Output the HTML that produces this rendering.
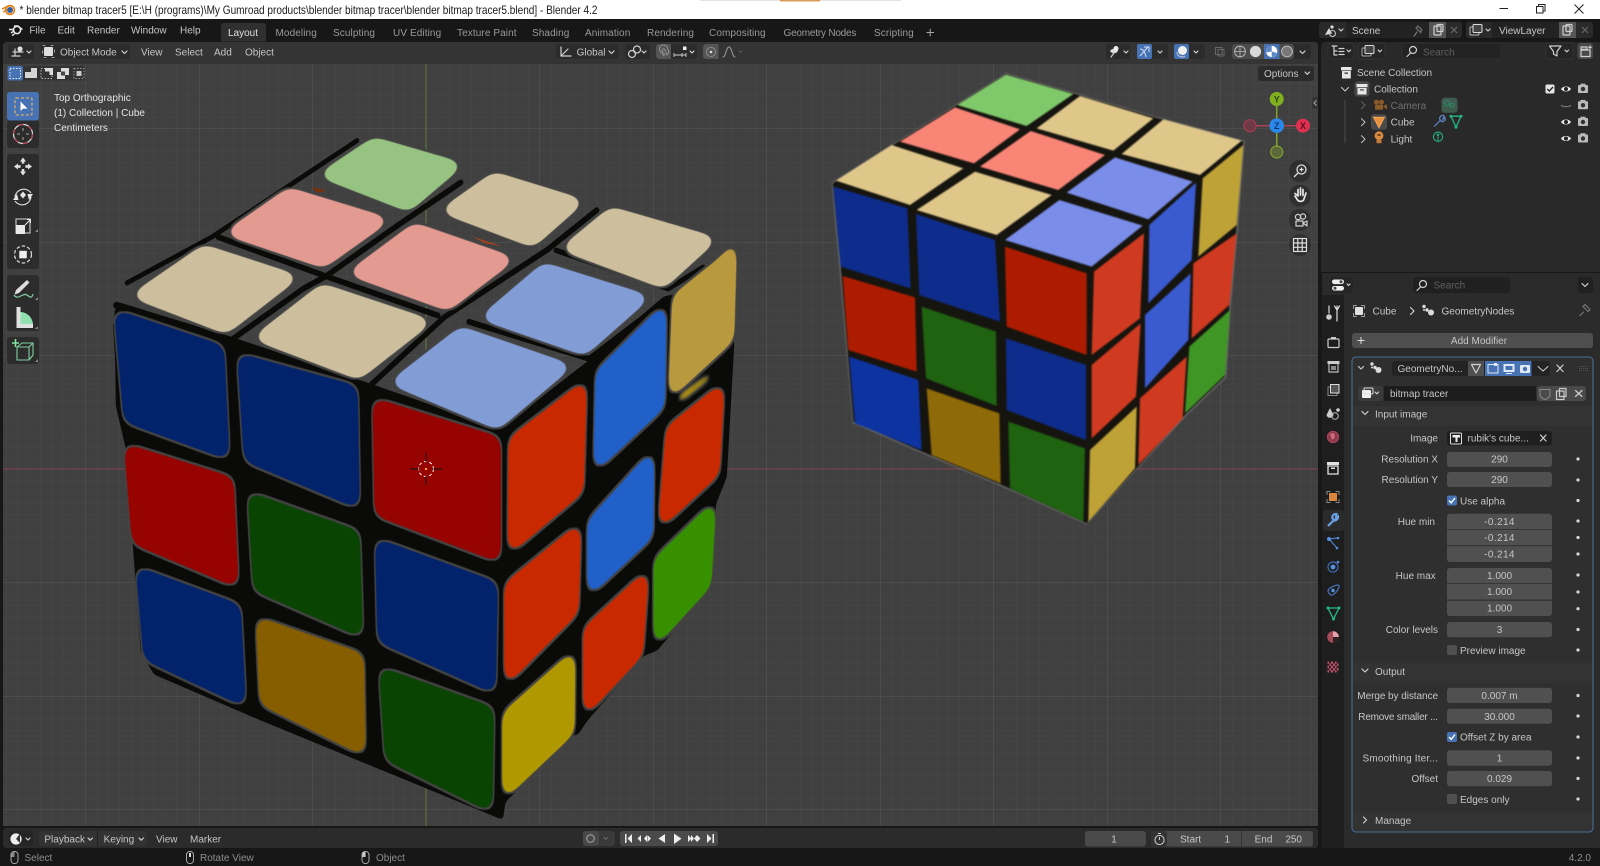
<!DOCTYPE html>
<html><head><meta charset="utf-8"><title>Blender 4.2</title>
<style>
html,body{margin:0;padding:0;background:#181818;overflow:hidden;width:1600px;height:866px}
svg{position:absolute;left:0;top:0;display:block}
text{font-family:"Liberation Sans",sans-serif;font-size:10px;fill:#c6c6c6}
.m{text-anchor:middle}.e{text-anchor:end}
.tab{fill:#9a9a9a;letter-spacing:.1px}
.st{fill:#8e8e8e}
.ic{fill:none;stroke:#d0d0d0;stroke-width:1.2;stroke-linecap:round;stroke-linejoin:round}
</style></head><body>
<svg width="1600" height="866" viewBox="0 0 1600 866" xmlns="http://www.w3.org/2000/svg">
<defs>
<pattern id="gm" width="11.35" height="11.35" patternUnits="userSpaceOnUse" patternTransform="translate(426 469)"><path d="M0 0H11.35M0 0V11.35" stroke="#484848" stroke-width="1" fill="none"/></pattern>
<pattern id="gM" width="113.5" height="113.5" patternUnits="userSpaceOnUse" patternTransform="translate(426 469)"><path d="M0 0H113.5M0 0V113.5" stroke="#575757" stroke-width="1" fill="none"/></pattern>
<filter id="stk" x="-25%" y="-25%" width="150%" height="150%" color-interpolation-filters="sRGB">
<feGaussianBlur stdDeviation="16"/><feComponentTransfer result="r"><feFuncA type="linear" slope="14" intercept="-6.2"/></feComponentTransfer>
<feMorphology in="r" operator="dilate" radius="4" result="d"/><feFlood flood-color="#434343"/><feComposite in2="d" operator="in" result="h"/>
<feMerge><feMergeNode in="h"/><feMergeNode in="r"/></feMerge></filter>
<filter id="bod" filterUnits="userSpaceOnUse" x="-50" y="-50" width="1750" height="1750" color-interpolation-filters="sRGB">
<feGaussianBlur stdDeviation="5"/><feComponentTransfer><feFuncA type="linear" slope="10" intercept="-4.5"/></feComponentTransfer></filter>
<filter id="soft" filterUnits="userSpaceOnUse" x="-50" y="-50" width="1500" height="1550" color-interpolation-filters="sRGB"><feGaussianBlur stdDeviation="2.6"/></filter>
</defs>

<!-- title bar -->
<rect width="1600" height="19" fill="#fff"/>
<rect x="700" y="0" width="201" height="1" fill="#e4e4e4"/><rect x="780" y="0" width="40" height="1.5" fill="#d89b58"/>
<circle cx="10" cy="10" r="3" fill="#2f5f9e"/><circle cx="10" cy="10" r="4.4" fill="none" stroke="#e87d0d" stroke-width="1.7"/><path d="M2 9L7 6.5M3 12L7 10" stroke="#e87d0d" stroke-width="1.3"/>
<text x="19.5" y="14" textLength="578" lengthAdjust="spacingAndGlyphs" style="font-size:12px;fill:#1a1a1a">* blender bitmap tracer5 [E:\H (programs)\My Gumroad products\blender bitmap tracer\blender bitmap tracer5.blend] - Blender 4.2</text>
<path d="M1499.5 8.5H1508" stroke="#222" stroke-width="1"/>
<rect x="1536.5" y="6.5" width="6.5" height="6.5" fill="none" stroke="#222"/><path d="M1538.5 6V4.5H1545V11H1543.5" fill="none" stroke="#222"/>
<path d="M1574.5 4.5L1583.5 13.5M1583.5 4.5L1574.5 13.5" stroke="#222" stroke-width="1"/>

<!-- window background & top bar -->
<rect y="19" width="1600" height="847" fill="#171717"/>
<g fill="none" stroke="#e8e8e8" stroke-width="1.5"><circle cx="17" cy="30" r="3.6"/><path d="M14 26H18L22.5 29.5M9 29.5L14 29.5M11 33L14.5 30.5M14.5 34L12 35.5" stroke-width="1.4"/></g>
<text x="29.4" y="33.5">File</text><text x="57.5" y="33.5">Edit</text><text x="87" y="33.5">Render</text><text x="131" y="33.5">Window</text><text x="180" y="33.5">Help</text>
<path d="M221 41.5V26a3 3 0 0 1 3-3H263a3 3 0 0 1 3 3V41.5Z" fill="#303030"/>
<text x="228" y="36" style="fill:#e0e0e0">Layout</text>
<text x="275.5" y="36" class="tab">Modeling</text><text x="333" y="36" class="tab">Sculpting</text><text x="393" y="36" class="tab">UV Editing</text><text x="457" y="36" class="tab">Texture Paint</text><text x="532" y="36" class="tab">Shading</text><text x="585" y="36" class="tab">Animation</text><text x="647" y="36" class="tab">Rendering</text><text x="709" y="36" class="tab">Compositing</text><text x="783.5" y="36" class="tab" textLength="73">Geometry Nodes</text><text x="874" y="36" class="tab">Scripting</text>
<path d="M926.5 32.5H934M930.2 28.7V36.3" stroke="#aaa" stroke-width="1"/>

<!-- scene / viewlayer -->
<rect x="1319" y="22" width="143" height="16" rx="3" fill="#2a2a2a"/>
<rect x="1346" y="22" width="83" height="16" fill="#222"/><rect x="1429" y="22" width="17" height="16" fill="#555"/>
<text x="1352" y="34">Scene</text>
<path d="M1325 35L1329 28L1332 33.5Z" fill="#ddd"/><circle cx="1332" cy="27" r="1.6" fill="#ddd"/><circle cx="1332.5" cy="33.5" r="3" fill="none" stroke="#ccc"/><path d="M1339 29l2 2 2-2" class="ic"/>
<path d="M1414 36L1417 32M1416 28l5 5M1418 26l4 4-2 2-4-4Z" class="ic" style="stroke:#777"/>
<rect x="1434" y="26" width="7" height="9" rx="1" class="ic"/><rect x="1437" y="24.5" width="6" height="7" rx="1" class="ic"/>
<path d="M1451 27L1457 33M1457 27L1451 33" stroke="#666" stroke-width="1.2"/>
<rect x="1466" y="22" width="127" height="16" rx="3" fill="#2a2a2a"/>
<rect x="1492" y="22" width="67" height="16" fill="#222"/><rect x="1559" y="22" width="17" height="16" fill="#555"/>
<text x="1499" y="34">ViewLayer</text>
<rect x="1470" y="27" width="9" height="8" rx="1" fill="none" stroke="#bbb"/><rect x="1473" y="24.5" width="9" height="8" rx="1" fill="#444" stroke="#ddd"/><path d="M1486 29l2 2 2-2" class="ic"/>
<rect x="1563" y="26" width="7" height="9" rx="1" class="ic"/><rect x="1566" y="24.5" width="6" height="7" rx="1" class="ic"/>
<path d="M1582 27L1588 33M1588 27L1582 33" stroke="#666" stroke-width="1.2"/>

<!-- 3D viewport -->
<path d="M3 46a4 4 0 0 1 4-4H1314a4 4 0 0 1 4 4V826H3Z" fill="#404040"/>
<rect x="3" y="64" width="1315" height="762" fill="url(#gm)"/>
<rect x="3" y="64" width="1315" height="762" fill="url(#gM)"/>
<path d="M3 46a4 4 0 0 1 4-4H1314a4 4 0 0 1 4 4V64H3Z" fill="#343434"/>
<path d="M3 469H1318" stroke="#85454d" stroke-width="1"/>
<path d="M426 64V826" stroke="#5f7d3c" stroke-width="1"/>

<!-- header controls -->
<rect x="8" y="44" width="26" height="15" rx="3" fill="#2b2b2b"/>
<path d="M13 52H23M15 49L15 56M12 56H20" class="ic"/><circle cx="20" cy="49" r="2.6" fill="#ddd"/><path d="M27 51l2 2 2-2" class="ic"/>
<rect x="40.5" y="44" width="89.5" height="15" rx="3" fill="#2b2b2b"/>
<rect x="44" y="47" width="9" height="9" fill="#ddd" rx="1"/><rect x="42.5" y="45.5" width="12" height="12" fill="none" stroke="#999" stroke-dasharray="3 5"/>
<text x="60" y="55.5">Object Mode</text><path d="M122 51l2.5 2.5 2.5-2.5" class="ic"/>
<text x="141" y="55.5">View</text><text x="175" y="55.5">Select</text><text x="214" y="55.5">Add</text><text x="245" y="55.5">Object</text>

<rect x="556" y="44" width="62.6" height="15" rx="3" fill="#2b2b2b"/>
<path d="M561 47V56H571M561 56L568 49" class="ic"/><text x="576.6" y="55.5">Global</text><path d="M609 51l2.5 2.5 2.5-2.5" class="ic"/>
<rect x="625" y="44" width="25" height="15" rx="3" fill="#2b2b2b"/>
<circle cx="632" cy="54" r="3.5" class="ic"/><circle cx="637" cy="49.5" r="3.5" class="ic"/><circle cx="634.5" cy="51.7" r="1" fill="#ddd"/><path d="M642 51l2 2 2-2" class="ic"/>
<rect x="656" y="44" width="41" height="15" rx="3" fill="#2b2b2b"/><path d="M659 44H671V59H659a3 3 0 0 1-3-3V47a3 3 0 0 1 3-3Z" fill="#555"/>
<path d="M664 56L660 51a4 4 0 0 1 7-4l2 5-2 3-2-5a1.5 1.5 0 0 0-3 1l3 4" class="ic" style="stroke-width:.9;stroke:#999"/>
<path d="M674 53V57M682 53V57M674 55H682M686 53V57M682 55H686" stroke="#ccc" stroke-width=".9"/><rect x="683" y="46.5" width="3.5" height="3.5" fill="#eee"/><path d="M690 51l2 2 2-2" class="ic"/>
<rect x="703" y="44" width="42" height="15" rx="3" fill="#343434"/><path d="M706 44H718.6V59H706a3 3 0 0 1-3-3V47a3 3 0 0 1 3-3Z" fill="#555"/>
<circle cx="711" cy="52" r="4.6" fill="none" stroke="#888"/><circle cx="711" cy="52" r="1.3" fill="#ddd"/>
<path d="M723 57C726 57 726 47 729 47S732 57 735 57" class="ic" style="stroke:#999;stroke-width:1"/><path d="M739 51l1.5 1.5 1.5-1.5" class="ic" style="stroke:#555"/>

<rect x="1106" y="44" width="24" height="15" rx="3" fill="#2b2b2b"/>
<path d="M1110 51c2-3 6-3 8 0-2 3-6 3-8 0Z" fill="#ddd"/><path d="M1111 57l3-4" class="ic"/><circle cx="1116" cy="48.5" r="2.5" fill="#eee"/><path d="M1124 51l2 2 2-2" class="ic"/>
<rect x="1137" y="44" width="31" height="15" rx="3" fill="#2b2b2b"/><rect x="1137" y="44" width="15" height="15" rx="2" fill="#4772b3"/>
<path d="M1140 56L1148 47M1144 47H1149V52M1140 49c3 0 5 3 6 8" fill="none" stroke="#d5e2f3" stroke-width="1"/><path d="M1158 51l2 2 2-2" class="ic"/>
<rect x="1174" y="44" width="31" height="15" rx="3" fill="#2b2b2b"/><rect x="1174" y="44" width="15" height="15" rx="2" fill="#4772b3"/>
<circle cx="1182.5" cy="50.5" r="4.5" fill="#f0f0f0"/><path d="M1177 52a5 5 0 0 0 8 4" fill="none" stroke="#ccd"/><path d="M1194 51l2 2 2-2" class="ic"/>
<rect x="1212" y="44" width="15" height="15" rx="3" fill="#343434"/><rect x="1215.5" y="47.5" width="6.5" height="7" fill="none" stroke="#666"/><rect x="1218" y="49.5" width="6" height="6.5" fill="none" stroke="#666"/>
<rect x="1232" y="44" width="79" height="15" rx="3" fill="#2b2b2b"/>
<rect x="1232" y="44" width="62" height="15" rx="3" fill="#4b4b4b"/><rect x="1264" y="44" width="15.5" height="15" fill="#4772b3"/>
<circle cx="1240" cy="51.5" r="5.4" fill="none" stroke="#bbb"/><path d="M1234.6 51.5H1245.4M1240 46V57" stroke="#bbb" stroke-width=".8"/>
<circle cx="1255.5" cy="51.5" r="5.6" fill="#d8d8d8"/>
<circle cx="1271.7" cy="51.5" r="5.6" fill="#fff"/><path d="M1271.7 51.5V46a5.6 5.6 0 0 0-5.4 6.5ZM1271.7 51.5L1277 53a5.6 5.6 0 0 1-5.3 4Z" fill="#5c86c4"/>
<circle cx="1287" cy="51.5" r="5.4" fill="#777" stroke="#bbb"/>
<path d="M1300 51l2.5 2.5 2.5-2.5" class="ic"/>
<rect x="1258" y="66" width="56" height="15" rx="3" fill="#2b2b2b"/><text x="1264" y="77">Options</text><path d="M1305 72l2.3 2.3 2.3-2.3" class="ic"/>

<!-- select modes -->
<rect x="7.5" y="66" width="78" height="14.5" rx="3" fill="#333"/>
<rect x="7.5" y="66" width="15.5" height="14.5" rx="2" fill="#4772b3"/>
<rect x="10" y="68.5" width="10.5" height="10" fill="none" stroke="#e6ecf5" stroke-dasharray="1.5 1.5"/>
<path d="M25 72H31V68H37V78H25Z" fill="#d4d4d4"/>
<rect x="41" y="68.5" width="11" height="10" fill="none" stroke="#bbb" stroke-dasharray="1.5 1.5"/><path d="M45 68H53V75H49.5V71.5H45Z" fill="#ddd"/>
<path d="M57 72H61V68H69V75H65V79H57Z" fill="#ddd"/><rect x="61" y="71.5" width="4" height="4" fill="#444"/>
<rect x="74" y="68.5" width="10" height="10" fill="none" stroke="#999" stroke-dasharray="1.5 1.5"/><rect x="76.5" y="71" width="5" height="5" fill="#ccc"/>

<!-- LEFT CUBE (traced) -->
<g transform="translate(100 120) scale(.41459 .44643)">
 <g filter="url(#bod)" fill="#0a0a08">
  <polygon points="35,420 330,495 640,590 960,695 1170,545 1360,395 1500,370 1530,500 1512,800 1486,860 1474,1042 1345,1188 1312,1200 1176,1345 1152,1378 1140,1378 978,1528 972,1568 380,1342 130,1242 98,1190 62,735 38,640"/>
 </g>
 <g fill="none" stroke="#0a0a08" stroke-linecap="round" stroke-linejoin="round">
  <path d="M65 365L270 262L620 46" stroke-width="11"/>
  <path d="M318 492L490 378L545 350L715 238L870 140" stroke-width="13"/>
  <path d="M655 592L830 442L1080 290L1198 202" stroke-width="13"/>
  <path d="M285 262L545 350L815 438" stroke-width="13"/>
  <path d="M890 452L1180 535L1300 450" stroke-width="13"/>
  <path d="M1100 292L1370 378L1455 330" stroke-width="12"/>
  <path d="M40 415L320 495L640 595L965 700L1130 590" stroke-width="16"/>
  <path d="M36 460L46 620M1522 515L1516 640" stroke-width="9"/>
 </g>
 <g>
  <polygon filter="url(#stk)" fill="#97c382" points="520,125 660,38 882,98 745,206"/>
  <polygon filter="url(#stk)" fill="#e39a90" points="294,255 455,151 706,222 540,332"/>
  <polygon filter="url(#stk)" fill="#e39a90" points="591,345 758,230 1007,310 840,428"/>
  <polygon filter="url(#stk)" fill="#cdbf9d" points="814,205 950,116 1174,180 1045,286"/>
  <polygon filter="url(#stk)" fill="#cdbf9d" points="1106,290 1232,194 1494,265 1360,378"/>
  <polygon filter="url(#stk)" fill="#cdbf9d" points="68,395 250,279 486,350 305,480"/>
  <polygon filter="url(#stk)" fill="#cdbf9d" points="363,490 535,366 807,450 625,582"/>
  <polygon filter="url(#stk)" fill="#829dd6" points="911,445 1070,319 1332,395 1170,528"/>
  <polygon filter="url(#stk)" fill="#829dd6" points="693,590 870,462 1144,550 960,694"/>
  <polygon filter="url(#stk)" fill="#02236b" points="34,424 299,506 312,762 58,676"/>
  <polygon filter="url(#stk)" fill="#02236b" points="331,522 621,596 626,872 348,764"/>
  <polygon filter="url(#stk)" fill="#960300" points="658,622 966,711 966,992 663,886"/>
  <polygon filter="url(#stk)" fill="#960300" points="58,724 322,801 334,1049 78,949"/>
  <polygon filter="url(#stk)" fill="#0a4403" points="356,832 626,921 634,1161 370,1054"/>
  <polygon filter="url(#stk)" fill="#02236b" points="664,936 959,1036 954,1286 670,1169"/>
  <polygon filter="url(#stk)" fill="#02236b" points="86,999 339,1086 352,1316 106,1209"/>
  <polygon filter="url(#stk)" fill="#865e00" points="376,1112 636,1196 640,1426 386,1309"/>
  <polygon filter="url(#stk)" fill="#0a4403" points="673,1224 950,1316 946,1552 688,1434"/>
  <polygon filter="url(#stk)" fill="#c92900" points="986,713 1174,579 1166,834 984,976"/>
  <polygon filter="url(#stk)" fill="#2060c8" points="1196,563 1366,406 1362,644 1191,792"/>
  <polygon filter="url(#stk)" fill="#a68a12" points="1378,625 1492,546 1482,578 1388,645"/>
  <polygon filter="url(#stk)" fill="#b9993e" points="1381,393 1498,306 1536,264 1529,494 1371,629"/>
  <polygon filter="url(#stk)" fill="#c92900" points="976,1038 1160,899 1154,1104 976,1271"/>
  <polygon filter="url(#stk)" fill="#2060c8" points="1176,898 1336,734 1334,934 1176,1071"/>
  <polygon filter="url(#stk)" fill="#c92900" points="1366,688 1506,584 1494,794 1346,921"/>
  <polygon filter="url(#stk)" fill="#b09800" points="971,1328 1146,1184 1144,1374 971,1526"/>
  <polygon filter="url(#stk)" fill="#c92900" points="1166,1138 1324,1002 1309,1199 1166,1341"/>
  <polygon filter="url(#stk)" fill="#379000" points="1336,983 1486,848 1474,1044 1336,1184"/>
 </g>
 <path d="M510 150L545 158L525 163Z" fill="#7a3208"/><path d="M895 260L970 283L930 276Z" fill="#a8441c"/>
</g>
<!-- 3D cursor -->
<circle cx="426" cy="469" r="7.5" fill="none" stroke="#fff" stroke-dasharray="3 2.5" stroke-width="1"/>
<path d="M410 469H419M433 469H442M426 453V462M426 476V485" stroke="#111" stroke-width="1"/>
<circle cx="426" cy="469" r="1.2" fill="#f5a623"/>

<!-- RIGHT CUBE (photo) -->
<g transform="translate(820 60) scale(.33333)">
 <g filter="url(#soft)">
  <polygon fill="#6e6e6e" points="35,368 235,242 410,132 558,39 760,97 1005,169 1274,243 1254,500 1232,743 1219,952 1098,1068 950,1229 800,1393 545,1279 305,1179 98,1089 58,622"/>
  <polygon fill="#16140f" points="38,370 235,245 410,135 558,42 760,100 1005,172 1270,245 1250,500 1228,740 1215,950 1095,1065 950,1225 800,1390 545,1275 305,1175 100,1085 62,620"/>
  <polygon fill="#80c96a" points="412,135 558,44 760,102 620,198"/>
  <polygon fill="#f98577" points="240,245 405,142 600,208 462,310"/>
  <polygon fill="#f98577" points="480,320 632,213 855,285 715,390"/>
  <polygon fill="#dfc78a" points="650,205 780,108 1000,175 880,272"/>
  <polygon fill="#dfc78a" points="905,282 1030,178 1265,242 1140,345"/>
  <polygon fill="#dfc78a" points="48,362 215,255 430,325 270,435"/>
  <polygon fill="#dfc78a" points="290,450 465,335 695,405 530,525"/>
  <polygon fill="#7a8de8" points="740,398 885,292 1118,365 985,478"/>
  <polygon fill="#7a8de8" points="555,540 718,420 968,497 815,620"/>
  <polygon fill="#0e2c8c" points="40,380 262,445 272,685 62,620"/>
  <polygon fill="#0e2c8c" points="288,462 525,540 540,785 298,705"/>
  <polygon fill="#ad1c00" points="555,560 800,640 800,885 560,800"/>
  <polygon fill="#ad1c00" points="68,648 285,712 290,935 85,870"/>
  <polygon fill="#1f6210" points="305,740 528,815 530,1038 318,955"/>
  <polygon fill="#0e2c8c" points="558,835 798,915 798,1140 560,1050"/>
  <polygon fill="#0d33a0" points="88,890 295,960 305,1170 105,1090"/>
  <polygon fill="#8f6a08" points="320,985 538,1060 542,1270 335,1185"/>
  <polygon fill="#1f6210" points="565,1085 795,1165 790,1385 570,1285"/>
  <polygon fill="#cf3a20" points="822,635 972,520 960,775 815,885"/>
  <polygon fill="#3a5ad0" points="988,495 1128,368 1115,600 985,730"/>
  <polygon fill="#bea236" points="1148,355 1270,255 1250,495 1135,590"/>
  <polygon fill="#cf3a20" points="815,915 962,790 948,1010 815,1135"/>
  <polygon fill="#3a5ad0" points="975,765 1112,640 1105,840 975,985"/>
  <polygon fill="#cf3a20" points="1120,610 1250,520 1228,735 1115,835"/>
  <polygon fill="#bea236" points="810,1170 950,1040 945,1225 805,1385"/>
  <polygon fill="#cf3a20" points="960,1015 1100,890 1088,1075 955,1215"/>
  <polygon fill="#3f9625" points="1108,860 1230,750 1215,945 1095,1060"/>
 </g>
</g>

<!-- gizmo -->
<path d="M1250 125.7H1303" stroke="#b04055" stroke-width="1.5"/><path d="M1276.7 99V152" stroke="#7fa32a" stroke-width="1.5"/>
<circle cx="1250" cy="125.7" r="6" fill="#6e3a46" stroke="#a8394f" stroke-width="1.2"/>
<circle cx="1276.7" cy="152" r="6" fill="#59693a" stroke="#7fa32a" stroke-width="1.2"/>
<circle cx="1303" cy="125.7" r="7" fill="#e1304f"/><text x="1303" y="129" class="m" style="font-size:9px;font-weight:bold;fill:#5a0d1c">X</text>
<circle cx="1276.7" cy="99" r="7" fill="#7fb01d"/><text x="1276.7" y="102.3" class="m" style="font-size:9px;font-weight:bold;fill:#2d4207">Y</text>
<circle cx="1276.7" cy="125.7" r="7.3" fill="#2b88ea"/><text x="1276.7" y="129" class="m" style="font-size:9px;font-weight:bold;fill:#0c3a70">Z</text>
<rect x="1312" y="97" width="6" height="12" rx="2" fill="#343434"/><path d="M1316.5 100.5L1314 103L1316.5 105.5" fill="none" stroke="#aaa"/>
<g fill="#2f2f2f"><circle cx="1300" cy="171" r="11"/><circle cx="1300" cy="195.7" r="11"/><circle cx="1300" cy="220" r="11"/><circle cx="1300" cy="245" r="11"/></g>
<circle cx="1301.5" cy="169.5" r="4.5" fill="none" stroke="#ddd" stroke-width="1.3"/><path d="M1298 173L1294 177M1299.5 169.5H1303.5M1301.5 167.5V171.5" stroke="#ddd" stroke-width="1.3"/>
<path d="M1295 196L1297.5 200C1299 202 1303 202 1304 199L1306 193M1298 196V189.5M1300.5 195V188M1303 195.5V189.5M1298 196L1295 193.5" fill="none" stroke="#e6e6e6" stroke-width="1.7" stroke-linecap="round"/>
<circle cx="1298" cy="217" r="2.6" class="ic"/><circle cx="1303" cy="216.5" r="2.6" class="ic"/><rect x="1296" y="221" width="7" height="5" class="ic"/><path d="M1303 223L1307 221V226Z" class="ic"/>
<rect x="1293.5" y="238.5" width="13" height="13" fill="none" stroke="#ddd" stroke-width="1.2"/><path d="M1293.5 243H1306.5M1293.5 247.3H1306.5M1297.8 238.5V251.5M1302.2 238.5V251.5" stroke="#ddd" stroke-width="1.2"/>

<!-- toolbar -->
<g fill="#2c2c2c">
<rect x="7" y="120" width="32" height="28" rx="3"/>
<rect x="7" y="154" width="32" height="115" rx="3"/>
<rect x="7" y="275" width="32" height="56" rx="3"/>
<rect x="7" y="337" width="32" height="27" rx="3"/>
</g>
<rect x="7" y="92" width="32" height="28.5" rx="3" fill="#4772b3"/>
<rect x="15" y="98" width="17" height="17" rx="1" fill="none" stroke="#d6ae6a" stroke-width="1.3" stroke-dasharray="3 2"/>
<path d="M20.5 101.5V111L23 108.6H27.5Z" fill="#fff"/>
<circle cx="23" cy="134" r="9.5" fill="none" stroke="#ddd" stroke-width="1.2"/><circle cx="23" cy="134" r="9.5" fill="none" stroke="#c03e4f" stroke-width="1.2" stroke-dasharray="5 5"/>
<path d="M23 128V131M23 137V140M17 134H20M26 134H29" stroke="#aaa" stroke-width="1"/>
<g transform="translate(0 -3)"><g fill="#e0e0e0"><path d="M23 160.5L20 164.5H26ZM23 178.5L20 174.5H26ZM14 169.5L18 166.5V172.5ZM32 169.5L28 166.5V172.5Z"/><rect x="21.7" y="164" width="2.6" height="2.6"/><rect x="21.7" y="172" width="2.6" height="2.6"/><rect x="18" y="168.2" width="2.6" height="2.6"/><rect x="25.4" y="168.2" width="2.6" height="2.6"/></g>
<path d="M15 200A8.8 8.8 0 0 1 31 196M31 200A8.8 8.8 0 0 1 15 204" fill="none" stroke="#ddd" stroke-width="1.1"/><path d="M13 203L17 197L18.5 203ZM33 197L29 203L27.5 197Z" fill="#e6e6e6"/><path d="M23 194.5L26 198L23 201.5L20 198Z" fill="#e6e6e6"/></g>
<rect x="16" y="219" width="14" height="14" fill="none" stroke="#bbb" stroke-width="1.2"/><rect x="16" y="225" width="9" height="9" fill="#e8e8e8"/><path d="M25 225L30 220M27 219.5H30.5V223" fill="none" stroke="#eee"/>
<path d="M35 232h3v-3Z" fill="#888"/>
<circle cx="23" cy="254.5" r="8.5" fill="none" stroke="#ddd" stroke-dasharray="3.5 2" stroke-width="1.2"/><rect x="19.3" y="250.8" width="7.5" height="7.5" fill="#eee"/>
<g transform="translate(0 -1)"><path d="M16 291L27 281L29.5 283.5L19 294L14.5 295.5Z" fill="#ddd"/><path d="M14 296C18 302 23 293 27 296S32 299 33 295" fill="none" stroke="#7fcfa0" stroke-width="1.2"/>
<path d="M16.5 308V329H33V325H20.5V308Z" fill="#e0e0e0"/><path d="M20.5 325V313A13 13 0 0 1 33 325Z" fill="#90e0b0"/></g>
<path d="M35 300h3v-3Z" fill="#888"/>
<path d="M35 329h3v-3Z" fill="#888"/>
<g transform="translate(0 2)"><path d="M17 345H29V358H17ZM17 345L22 341H33V353L29 358M29 345L33 341" fill="none" stroke="#7fcfa0" stroke-width="1.1"/><path d="M15.5 337V345M12 341H19" stroke="#7fe09e" stroke-width="1.6"/></g>
<path d="M35 362h3v-3Z" fill="#888"/>

<!-- overlay text -->
<g style="fill:#e6e6e6"><text x="54" y="101" style="fill:#e6e6e6">Top Orthographic</text><text x="54" y="116" style="fill:#e6e6e6">(1) Collection | Cube</text><text x="54" y="131" style="fill:#e6e6e6">Centimeters</text></g>

<!-- timeline -->
<rect x="3" y="828" width="1315" height="20" rx="3" fill="#2b2b2b"/>
<rect x="9" y="831" width="24" height="15" rx="3" fill="#252525"/>
<circle cx="16" cy="839" r="5.6" fill="#eee"/><path d="M16 839L20 833.5V843Z" fill="#333"/><path d="M26 838l2 2 2-2" class="ic"/>
<rect x="39" y="831" width="108" height="15" rx="3" fill="#333"/>
<rect x="97" y="831" width="1" height="15" fill="#222"/>
<text x="44.4" y="842.5">Playback</text><path d="M88 838l2.2 2.2 2.2-2.2" class="ic"/>
<text x="103.6" y="842.5">Keying</text><path d="M139 838l2.2 2.2 2.2-2.2" class="ic"/>
<text x="156" y="842.5">View</text><text x="190" y="842.5">Marker</text>
<rect x="583" y="831" width="32" height="15" rx="3" fill="#3a3a3a"/><rect x="583" y="831" width="16" height="15" rx="3" fill="#484848"/>
<circle cx="590.5" cy="838.5" r="3.8" fill="none" stroke="#aaa"/><path d="M604 837.5l1.8 1.8 1.8-1.8" class="ic" style="stroke:#666"/>
<rect x="620" y="831" width="98" height="15" rx="3" fill="#4a4a4a"/>
<g fill="#eee">
<path d="M625 834H626.5V843H625ZM632 834V843L627.5 838.5Z"/>
<path d="M644 838.5L647 835V842ZM641 835L637.5 838.5L641 842ZM651 838.5L647.5 835V842Z"/>
<path d="M665 834V843L658.5 838.5Z"/>
<path d="M674 833.5V844L681.5 838.7Z"/>
<path d="M694 838.5L691 835V842ZM688 835V842L691.5 838.5ZM697 835L700.5 838.5L697 842L694 838.5Z"/>
<path d="M707 834V843L711.5 838.5ZM712.5 834H714V843H712.5Z"/>
</g>
<rect x="1085" y="831" width="61" height="15.5" rx="3" fill="#4a4a4a"/><text x="1114" y="842.5" class="m">1</text>
<rect x="1151" y="831" width="162" height="15.5" rx="3" fill="#4a4a4a"/><rect x="1151" y="831" width="16" height="15.5" rx="3" fill="#333"/>
<circle cx="1159.5" cy="840" r="4.6" fill="none" stroke="#ccc"/><path d="M1159.5 840V837M1158 833.5H1161" stroke="#ccc"/>
<rect x="1241" y="831" width="1" height="15.5" fill="#333"/>
<text x="1180" y="842.5">Start</text><text x="1230" y="842.5" class="e">1</text><text x="1254.6" y="842.5">End</text><text x="1302" y="842.5" class="e">250</text>

<!-- status bar -->
<g fill="none" stroke="#aaa"><rect x="11" y="851.5" width="7" height="12" rx="3.2"/><rect x="186.5" y="851.5" width="7" height="12" rx="3.2"/><rect x="362" y="851.5" width="7" height="12" rx="3.2"/></g>
<rect x="189" y="853" width="2" height="4" fill="#ddd"/><rect x="362.5" y="852" width="3" height="5" fill="#ccc"/><rect x="11.5" y="852" width="3" height="5" fill="#888"/>
<text x="24.5" y="861" class="st">Select</text><text x="200" y="861" class="st">Rotate View</text><text x="376" y="861" class="st">Object</text>
<text x="1591" y="861" class="st e">4.2.0</text>

<!-- outliner -->
<path d="M1321 46a4 4 0 0 1 4-4H1600V272H1321Z" fill="#292929"/>
<rect x="1328" y="43" width="26" height="16" rx="3" fill="#252525" stroke="#333"/>
<path d="M1332 46H1337M1334 46V55H1337M1334 51H1337" class="ic"/><path d="M1339 48.5H1344M1339 51.5H1344M1339 54.5H1344" class="ic"/><path d="M1347 50l1.8 1.8 1.8-1.8" class="ic"/>
<rect x="1358.5" y="43" width="26.5" height="16" rx="3" fill="#252525" stroke="#333"/>
<rect x="1362" y="48" width="9" height="8" rx="1" fill="none" stroke="#aaa"/><rect x="1365" y="45.5" width="9" height="8" rx="1" fill="#444" stroke="#ddd"/><path d="M1378 50l1.8 1.8 1.8-1.8" class="ic"/>
<rect x="1402" y="43" width="99" height="16" rx="4" fill="#232323" stroke="#2e2e2e"/>
<circle cx="1413" cy="50" r="3.5" class="ic"/><path d="M1410.5 53L1407 56.5" class="ic"/><text x="1423" y="55.5" style="fill:#5f5f5f">Search</text>
<rect x="1546" y="43" width="27" height="16" rx="3" fill="#252525" stroke="#333"/>
<path d="M1549.5 46H1561L1557 51.5V56L1553.5 54V51.5Z" class="ic"/><path d="M1565 50l1.8 1.8 1.8-1.8" class="ic"/>
<rect x="1577.5" y="43" width="15.5" height="16" rx="3" fill="#4a4a4a"/>
<rect x="1581" y="50" width="9" height="6.5" class="ic"/><rect x="1581" y="47" width="6" height="2.4" class="ic"/><path d="M1590 45.5V49M1588.2 47.2H1591.8" stroke="#ddd"/>

<rect x="1341" y="67" width="10.5" height="3.4" fill="#e6e6e6"/><rect x="1342" y="71" width="8.8" height="7.5" fill="#e6e6e6"/><rect x="1344.5" y="72.5" width="3.5" height="1.3" fill="#333"/>
<text x="1357" y="76">Scene Collection</text>
<path d="M1341.5 87.5L1345 91L1348.5 87.5" class="ic" style="stroke-width:1"/>
<rect x="1354.5" y="81.5" width="15" height="15" rx="3" fill="#4a4a4a"/><rect x="1356.5" y="84" width="11" height="3.2" fill="#e6e6e6"/><rect x="1357.5" y="88" width="9" height="6.5" fill="#e6e6e6"/><rect x="1360" y="89.3" width="4" height="1.2" fill="#444"/>
<text x="1374" y="92.5">Collection</text>
<path d="M1345 100V143" stroke="#4b4b4b" stroke-width="1"/>
<g transform="translate(0 -.8)">
<path d="M1361.5 102.5L1365 106L1361.5 109.5" class="ic" style="stroke:#666;stroke-width:1"/>
<g fill="#8a5a28"><circle cx="1376.5" cy="103" r="2.5"/><circle cx="1381.5" cy="103" r="2.5"/><rect x="1375" y="105.5" width="8" height="5" rx="1"/><path d="M1383 107L1387 105V110.5Z"/></g>
<text x="1390.6" y="110" style="fill:#707070">Camera</text>
<rect x="1441.5" y="98.5" width="16" height="15" rx="3" fill="#3f5a4f"/><circle cx="1447" cy="104" r="2.6" fill="none" stroke="#2c8a6a"/><circle cx="1452" cy="106" r="2" fill="none" stroke="#2c8a6a"/>
<path d="M1561 106C1563 108 1569 108 1571 106" fill="none" stroke="#888"/>
<path d="M1361.5 119.5L1365 123L1361.5 126.5" class="ic" style="stroke-width:1"/>
<rect x="1371" y="115" width="16" height="15.5" rx="3" fill="#4a4a4a"/><path d="M1373.5 118H1384.5L1379 128.5Z" fill="#e8913e" stroke="#f0a55e"/>
<text x="1390.6" y="126.5">Cube</text>
<path d="M1434 127.5L1440.5 121M1444 116.5A3 3 0 0 0 1440 120.5L1442 122.5A3 3 0 0 0 1445 118.5L1443 120Z" fill="none" stroke="#5b7fbf" stroke-width="1.3"/>
<path d="M1451 117H1461L1456 128Z" fill="none" stroke="#24b67f" stroke-width="1.3"/><g fill="#24b67f"><circle cx="1451" cy="117" r="1.5"/><circle cx="1461" cy="117" r="1.5"/><circle cx="1456" cy="128" r="1.5"/></g>
<path d="M1361.5 136.5L1365 140L1361.5 143.5" class="ic" style="stroke-width:1"/>
<circle cx="1379" cy="136.5" r="4.4" fill="#d98840"/><rect x="1376.5" y="140.5" width="5" height="3.5" fill="#c07a3a"/><rect x="1377.5" y="135" width="3" height="1.5" fill="#4a2c10"/>
<text x="1390.6" y="143.5">Light</text>
<circle cx="1438" cy="137.5" r="4.6" fill="none" stroke="#24a67a" stroke-width="1.2"/><path d="M1438 136V143" stroke="#24a67a"/><circle cx="1438" cy="135.5" r="1.3" fill="#24a67a"/>
</g>
<rect x="1545.5" y="84.5" width="9" height="9" rx="1.5" fill="#e4e4e4"/><path d="M1547.3 89L1549.3 91L1553 87" fill="none" stroke="#222" stroke-width="1.3"/>
<g fill="#e8e8e8"><path d="M1561 89c2-3.4 8-3.4 10 0-2 3.4-8 3.4-10 0Z"/><path d="M1561 122c2-3.4 8-3.4 10 0-2 3.4-8 3.4-10 0Z"/><path d="M1561 138.5c2-3.4 8-3.4 10 0-2 3.4-8 3.4-10 0Z"/></g>
<g fill="#222"><circle cx="1566" cy="89" r="2"/><circle cx="1566" cy="122" r="2"/><circle cx="1566" cy="138.5" r="2"/></g>
<g fill="#bbb"><rect x="1578" y="85" width="10" height="8" rx="1"/><rect x="1578" y="101.2" width="10" height="8" rx="1"/><rect x="1578" y="118" width="10" height="8" rx="1"/><rect x="1578" y="134.5" width="10" height="8" rx="1"/><rect x="1580.5" y="83.7" width="5" height="2"/><rect x="1580.5" y="99.9" width="5" height="2"/><rect x="1580.5" y="116.7" width="5" height="2"/><rect x="1580.5" y="133.2" width="5" height="2"/></g>
<g fill="#333"><circle cx="1583" cy="89" r="2.2"/><circle cx="1583" cy="105.2" r="2.2"/><circle cx="1583" cy="122" r="2.2"/><circle cx="1583" cy="138.5" r="2.2"/></g>

<!-- properties -->
<path d="M1322 277a4 4 0 0 1 4-4H1600V848H1322Z" fill="#1e1e1e"/>
<rect x="1322" y="273" width="278" height="22" fill="#2a2a2a"/>
<rect x="1344" y="295" width="256" height="553" fill="#2b2b2b"/>
<rect x="1330" y="277" width="23" height="16" rx="3" fill="#252525"/>
<rect x="1332" y="279.5" width="12" height="4.6" rx="2.3" fill="#eee"/><rect x="1332" y="286" width="12" height="4.6" rx="2.3" fill="#eee"/><circle cx="1341" cy="281.8" r="1.5" fill="#444"/><circle cx="1335" cy="288.3" r="1.5" fill="#444"/><path d="M1347 284l1.5 1.5 1.5-1.5" class="ic"/>
<rect x="1413" y="277" width="97" height="16" rx="4" fill="#202020"/>
<circle cx="1423" cy="284" r="3.5" class="ic"/><path d="M1420.5 287L1417 290.5" class="ic"/><text x="1433.5" y="288.5" style="fill:#5f5f5f">Search</text>
<rect x="1578" y="277" width="15" height="16" rx="3" fill="#202020"/><path d="M1582 283.5l3 3 3-3" class="ic"/>

<!-- tabs column -->
<rect x="1323" y="510" width="21" height="21" rx="3" fill="#2b2b2b"/>
<g>
 <path d="M1329 306V313M1337 306L1337 321M1334.5 306L1337 310L1339.5 306" class="ic" style="stroke:#ddd"/><circle cx="1329" cy="317" r="2.8" fill="#ccc"/>
 <rect x="1328" y="339" width="11" height="8.5" rx="1" fill="none" stroke="#ccc" stroke-width="1.2"/><rect x="1331" y="337" width="5" height="2" fill="#ccc"/>
 <rect x="1327.5" y="361" width="12" height="3" fill="#ccc"/><path d="M1329 364V372H1338V364" fill="none" stroke="#bbb" stroke-width="1.2"/><rect x="1331" y="366" width="5" height="4" fill="#888"/>
 <rect x="1328" y="387" width="9" height="8.5" fill="none" stroke="#888"/><rect x="1330.5" y="384.5" width="8.5" height="8.5" fill="#555" stroke="#ddd"/>
 <path d="M1330 408L1326.5 415A3.6 3.6 0 0 0 1333.5 415Z" fill="#ccc"/><circle cx="1338" cy="410" r="1.8" fill="#ccc"/><circle cx="1335" cy="416" r="3.3" fill="none" stroke="#bbb"/>
 <circle cx="1333" cy="437" r="5.6" fill="#8c3b4a" stroke="#b2455a"/><path d="M1330 434L1334 433L1335 437L1332 440Z" fill="#d06a7e"/>
 <rect x="1327" y="462" width="12" height="3" fill="#e2e2e2"/><path d="M1328 466H1338V474H1328Z" fill="none" stroke="#e2e2e2" stroke-width="1.3"/><rect x="1331" y="467.5" width="4" height="1.5" fill="#e2e2e2"/>
 <rect x="1329" y="493" width="8" height="8" fill="#d9873e"/><path d="M1327 495V491.5H1330.5M1335.5 491.5H1339V495M1339 499V502.5H1335.5M1330.5 502.5H1327V499" fill="none" stroke="#888"/>
 <path d="M1328 526L1333.5 520.5M1336.5 514A3.5 3.5 0 0 0 1332.5 518.5L1334.5 520.5A3.5 3.5 0 0 0 1338 516.5L1336 518Z" fill="none" stroke="#6aa1e6" stroke-width="2.2"/>
 <g fill="none" stroke="#4c7cc0" stroke-width="1.3"><path d="M1329 539L1338 538M1329 539L1337 548"/></g><circle cx="1329" cy="539" r="2" fill="#5590dc"/><circle cx="1338" cy="538" r="1.3" fill="#5590dc"/><circle cx="1337" cy="548" r="1.3" fill="#5590dc"/>
 <circle cx="1333" cy="567" r="5" fill="none" stroke="#3f69a8" stroke-width="1.2"/><circle cx="1333" cy="567" r="2.4" fill="#5590dc"/><circle cx="1338" cy="562" r="1.3" fill="#5590dc"/>
 <path d="M1329 593C1326 590 1331 587 1334 586S1340 584 1339 587S1337 592 1334 594S1330 595 1329 593Z" fill="none" stroke="#4470b0" stroke-width="1.3"/><circle cx="1333" cy="590.5" r="1.8" fill="#5590dc"/>
 <path d="M1328 608H1339L1333.5 619Z" fill="none" stroke="#22ba80" stroke-width="1.3"/><g fill="#22ba80"><circle cx="1328" cy="608" r="1.5"/><circle cx="1339" cy="608" r="1.5"/><circle cx="1333.5" cy="619" r="1.5"/></g>
 <circle cx="1333" cy="637" r="5.8" fill="#a84a55"/><path d="M1333 637V631.2A5.8 5.8 0 0 1 1338.8 637Z" fill="#e2a3ad"/><path d="M1333 637H1338.8A5.8 5.8 0 0 1 1333 642.8Z" fill="#2e2025"/>
 <rect x="1327.5" y="661.5" width="11" height="11" fill="#b25566"/>
 <path d="M1329 661.5h2v2h-2zM1333 661.5h2v2h-2zM1336.5 661.5h2v2h-2zM1327.5 663.7h2v2h-2zM1331 663.7h2v2h-2zM1335 663.7h2v2h-2zM1329 666h2v2h-2zM1333 666h2v2h-2zM1336.5 666h2v2h-2zM1327.5 668.3h2v2h-2zM1331 668.3h2v2h-2zM1335 668.3h2v2h-2zM1329 670.5h2v2h-2zM1333 670.5h2v2h-2zM1336.5 670.5h2v2h-2z" fill="#391f25"/>
</g>

<!-- breadcrumb -->
<rect x="1355" y="307" width="8" height="8" rx="1" fill="#e0e0e0"/><path d="M1353.5 309V305.5H1357M1361 305.5H1364.5V309M1364.5 313V316.5H1361M1357 316.5H1353.5V313" fill="none" stroke="#999"/>
<text x="1372.5" y="314.5">Cube</text>
<path d="M1410.5 307.5L1414 311L1410.5 314.5" class="ic"/>
<g fill="#ddd"><circle cx="1424" cy="306.5" r="1.7"/><circle cx="1427" cy="310" r="1.7"/><circle cx="1431" cy="312.5" r="3"/><circle cx="1424" cy="310" r="1"/></g>
<text x="1441.5" y="314.5">GeometryNodes</text>
<path d="M1580 315.5L1583.5 312M1583 306.5L1588 311.5M1585 304.5L1590 309.5L1588 311.5L1583 306.5Z" class="ic" style="stroke:#777"/>
<rect x="1352" y="333" width="241" height="15" rx="3" fill="#4f4f4f"/>
<path d="M1357.5 340.5H1364.5M1361 337V344" stroke="#ddd" stroke-width="1"/>
<text x="1479" y="344" class="m">Add Modifier</text>

<!-- modifier panel -->
<rect x="1352" y="357" width="241" height="475" rx="4" fill="#2f2f2f" stroke="#4a6d9a" stroke-width="1.1"/>
<path d="M1358.5 366.5L1361 369L1363.5 366.5" class="ic"/>
<g fill="#ddd"><circle cx="1372" cy="364" r="1.7"/><circle cx="1375" cy="367.5" r="1.7"/><circle cx="1378.5" cy="370" r="3"/><circle cx="1372" cy="367.5" r="1"/></g>
<rect x="1392" y="361" width="158" height="15" rx="3" fill="#232323"/>
<text x="1397.5" y="372">GeometryNo...</text>
<rect x="1468" y="361" width="16" height="15" fill="#4f4f4f"/>
<rect x="1485" y="361" width="46.5" height="15" fill="#4772b3"/>
<path d="M1471.5 364.5H1480.5L1476 373Z" class="ic"/>
<rect x="1488" y="364.5" width="10" height="8.5" fill="none" stroke="#dfe8f5"/><g fill="#dfe8f5"><rect x="1494" y="363" width="3" height="3"/></g>
<rect x="1504" y="364.5" width="10" height="7" fill="#dfe8f5" stroke="#dfe8f5"/><rect x="1505.5" y="366" width="7" height="4" fill="#4772b3"/><path d="M1506 373.5H1512" stroke="#dfe8f5"/>
<rect x="1520" y="365" width="10" height="8" rx="1" fill="#dfe8f5"/><circle cx="1525" cy="369" r="2.2" fill="#4772b3"/>
<path d="M1538 366.5L1543 371L1548 366.5" class="ic" style="stroke-width:1"/>
<path d="M1557 365L1563 371.5M1563 365L1557 371.5" class="ic"/>
<path d="M1579 366.5H1589M1579 368.5H1589M1579 370.5H1589" stroke="#555" stroke-dasharray="1 1"/>

<rect x="1358" y="386" width="25" height="15" rx="3" fill="#3b3b3b"/>
<rect x="1362" y="390" width="9" height="8" rx="1" fill="#eee"/><rect x="1364" y="388" width="9" height="6" rx="1" fill="none" stroke="#ddd"/><path d="M1375 392l1.8 1.8 1.8-1.8" class="ic"/>
<rect x="1384" y="386" width="152" height="15" fill="#1d1d1d"/><text x="1390" y="397">bitmap tracer</text>
<rect x="1537" y="386" width="49" height="15" rx="3" fill="#4a4a4a"/>
<path d="M1540 389.5L1540 395C1540 397 1543 399 1545 399.5C1547 399 1550 397 1550 395V389.5Z" fill="none" stroke="#8a8a8a"/>
<rect x="1556.5" y="391" width="7.5" height="8.5" class="ic" style="stroke:#ccc"/><rect x="1559.5" y="388.5" width="6.5" height="8" class="ic" style="stroke:#ccc"/>
<path d="M1575.5 390.5L1582 396.5M1582 390.5L1575.5 396.5" class="ic"/>

<rect x="1353" y="406" width="239" height="20" fill="#333"/>
<path d="M1362 411.5L1365 414.5L1368 411.5" class="ic"/><text x="1375" y="417.5">Input image</text>

<text x="1438" y="441.5" class="e">Image</text>
<rect x="1447" y="431" width="105" height="14.5" rx="3" fill="#1f1f1f"/>
<rect x="1450.5" y="433" width="11" height="11" rx="1" fill="none" stroke="#ddd"/><path d="M1452.5 435H1460V437.5H1457.5V442H1455.5V437.5H1452.5Z" fill="#eee"/>
<text x="1467.5" y="441.5">rubik's cube...</text>
<path d="M1540.5 435L1546 441M1546 435L1540.5 441" class="ic"/>

<!-- number fields -->
<g fill="#505050">
<rect x="1447" y="452" width="105" height="15" rx="3"/><rect x="1447" y="472" width="105" height="15" rx="3"/>
<path d="M1450 513.7H1549a3 3 0 0 1 3 3V529H1447V516.7a3 3 0 0 1 3-3Z"/><rect x="1447" y="529.8" width="105" height="15.5"/><path d="M1447 546.3H1552V559a3 3 0 0 1-3 3H1450a3 3 0 0 1-3-3Z"/>
<path d="M1450 568H1549a3 3 0 0 1 3 3V583.3H1447V571a3 3 0 0 1 3-3Z"/><rect x="1447" y="584" width="105" height="15.5"/><path d="M1447 600.7H1552V613a3 3 0 0 1-3 3H1450a3 3 0 0 1-3-3Z"/>
<rect x="1447" y="622" width="105" height="15.3" rx="3"/>
<rect x="1447" y="687.7" width="105" height="15.3" rx="3"/><rect x="1447" y="708.7" width="105" height="15" rx="3"/>
<rect x="1447" y="750.3" width="105" height="15.4" rx="3"/><rect x="1447" y="771" width="105" height="15.3" rx="3"/>
</g>
<g>
<text x="1438" y="462.5" class="e">Resolution X</text><text x="1499.5" y="462.5" class="m">290</text>
<text x="1438" y="483" class="e">Resolution Y</text><text x="1499.5" y="483" class="m">290</text>
<text x="1435" y="525" class="e">Hue min</text><text x="1499.5" y="525" class="m" letter-spacing=".4">-0.214</text><text x="1499.5" y="541" class="m" letter-spacing=".4">-0.214</text><text x="1499.5" y="557.5" class="m" letter-spacing=".4">-0.214</text>
<text x="1435.7" y="579" class="e">Hue max</text><text x="1499.5" y="579" class="m">1.000</text><text x="1499.5" y="595" class="m">1.000</text><text x="1499.5" y="611.5" class="m">1.000</text>
<text x="1438" y="633" class="e">Color levels</text><text x="1499.5" y="633" class="m">3</text>
<text x="1438" y="699" class="e" textLength="80.7">Merge by distance</text><text x="1499.5" y="699" class="m">0.007 m</text>
<text x="1438" y="720" class="e" textLength="79.7">Remove smaller ...</text><text x="1499.5" y="720" class="m">30.000</text>
<text x="1438" y="761.5" class="e" textLength="75.5">Smoothing Iter...</text><text x="1499.5" y="761.5" class="m">1</text>
<text x="1438" y="782" class="e">Offset</text><text x="1499.5" y="782" class="m">0.029</text>
</g>
<rect x="1447" y="495.5" width="10" height="10" rx="2" fill="#4772b3"/><path d="M1449 500.5L1451.2 502.8L1455 498" fill="none" stroke="#fff" stroke-width="1.4"/>
<text x="1460" y="504.3">Use alpha</text>
<rect x="1447" y="645" width="10" height="10" rx="2" fill="#505050"/><text x="1460" y="654">Preview image</text>
<rect x="1353" y="663" width="239" height="20" fill="#333"/>
<path d="M1362 669L1365 672L1368 669" class="ic"/><text x="1375" y="675">Output</text>
<rect x="1447" y="732" width="10" height="10" rx="2" fill="#4772b3"/><path d="M1449 737L1451.2 739.3L1455 734.5" fill="none" stroke="#fff" stroke-width="1.4"/>
<text x="1460" y="740.7">Offset Z by area</text>
<rect x="1447" y="794" width="10" height="10" rx="2" fill="#505050"/><text x="1460" y="803">Edges only</text>
<path d="M1353 812H1592V828a3 3 0 0 1-3 3H1356a3 3 0 0 1-3-3Z" fill="#333"/>
<path d="M1363.5 817L1366.5 820L1363.5 823" class="ic"/><text x="1375" y="824">Manage</text>
<g fill="#d8d8d8">
<circle cx="1578" cy="459" r="1.6"/><circle cx="1578" cy="480" r="1.6"/><circle cx="1578" cy="500.5" r="1.6"/><circle cx="1578" cy="521" r="1.6"/><circle cx="1578" cy="537.5" r="1.6"/><circle cx="1578" cy="554" r="1.6"/>
<circle cx="1578" cy="575" r="1.6"/><circle cx="1578" cy="592" r="1.6"/><circle cx="1578" cy="608.7" r="1.6"/><circle cx="1578" cy="629.5" r="1.6"/><circle cx="1578" cy="650" r="1.6"/>
<circle cx="1578" cy="695.5" r="1.6"/><circle cx="1578" cy="716" r="1.6"/><circle cx="1578" cy="737" r="1.6"/><circle cx="1578" cy="758" r="1.6"/><circle cx="1578" cy="778.5" r="1.6"/><circle cx="1578" cy="799" r="1.6"/>
</g>
</svg>
</body></html>
